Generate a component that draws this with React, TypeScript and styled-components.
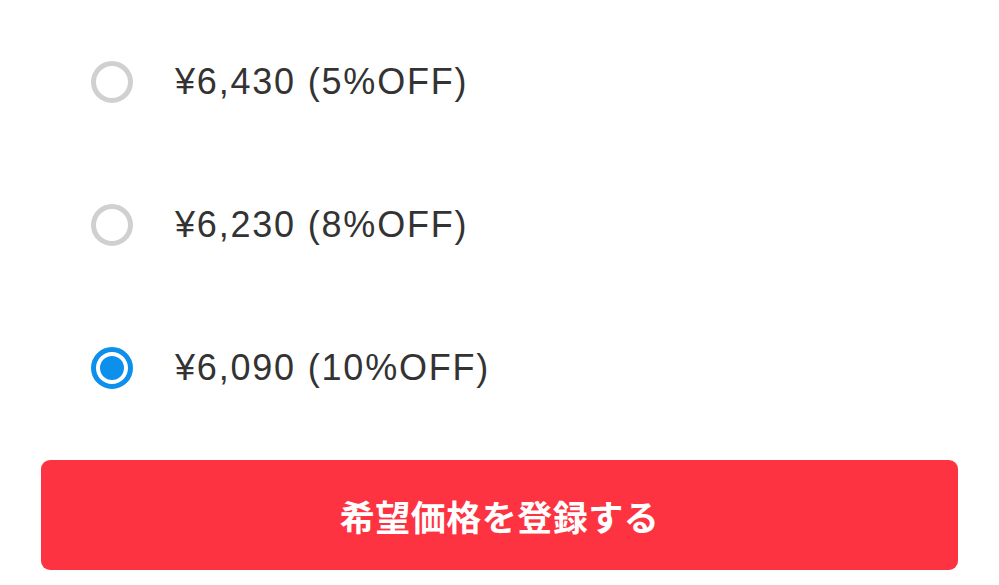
import styled, { createGlobalStyle } from "styled-components";
import { useState } from "react";

const GlobalStyle = createGlobalStyle`
  html, body {
    margin: 0;
    padding: 0;
    background: #ffffff;
  }
  body {
    font-family: "Liberation Sans", "Noto Sans CJK JP", sans-serif;
  }
`;

const Page = styled.div`
  width: 999px;
  height: 585px;
  display: flex;
  flex-direction: column;
  padding-top: 10px;
  box-sizing: border-box;
  overflow: hidden;
`;

const Options = styled.div`
  display: flex;
  flex-direction: column;
`;

const OptionRow = styled.label`
  height: 143px;
  display: flex;
  align-items: center;
  gap: 42px;
  padding-left: 91px;
  cursor: pointer;
`;

const Radio = styled.span<{ $checked: boolean }>`
  width: 42px;
  height: 42px;
  box-sizing: border-box;
  border-radius: 50%;
  border: 5px solid ${(p) => (p.$checked ? "#0d90ec" : "#d0d0d0")};
  display: flex;
  align-items: center;
  justify-content: center;
  flex-shrink: 0;

  &::after {
    content: "";
    width: 24px;
    height: 24px;
    border-radius: 50%;
    background: #0d90ec;
    display: ${(p) => (p.$checked ? "block" : "none")};
  }
`;

const Price = styled.span`
  font-family: "Liberation Sans", "Noto Sans CJK JP", sans-serif;
  font-size: 36px;
  letter-spacing: 1.8px;
  color: #333333;
  line-height: 1;
`;

const SubmitButton = styled.button`
  margin: 21px 41px 0;
  height: 110px;
  border: none;
  border-radius: 9px;
  background: #fe3341;
  color: #ffffff;
  font-family: "Noto Sans CJK JP", sans-serif;
  font-weight: 700;
  font-size: 35px;
  letter-spacing: 0.5px;
  display: flex;
  align-items: center;
  justify-content: center;
  cursor: pointer;
`;

const options = [
  { id: "a", label: "¥6,430 (5%OFF)" },
  { id: "b", label: "¥6,230 (8%OFF)" },
  { id: "c", label: "¥6,090 (10%OFF)" },
];

export default function App() {
  const [selected, setSelected] = useState("c");
  return (
    <>
      <GlobalStyle />
      <Page>
        <Options>
          {options.map((o) => (
            <OptionRow key={o.id} onClick={() => setSelected(o.id)}>
              <Radio $checked={selected === o.id} />
              <Price>{o.label}</Price>
            </OptionRow>
          ))}
        </Options>
        <SubmitButton>希望価格を登録する</SubmitButton>
      </Page>
    </>
  );
}
